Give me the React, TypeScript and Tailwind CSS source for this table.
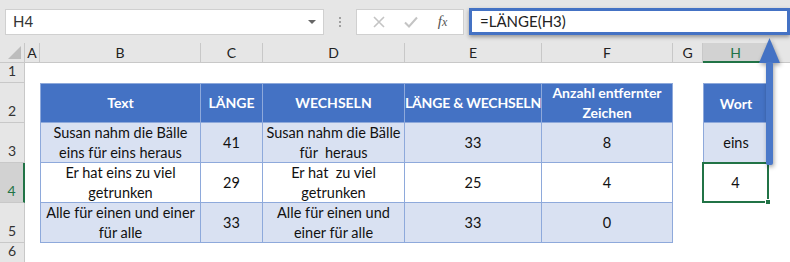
import React from 'react';

const colWidths = [25, 15, 161, 62, 142, 137, 131, 30, 66, 64];
const colLetters = ['A', 'B', 'C', 'D', 'E', 'F', 'G', 'H', ''];

const headers = ['Text', 'LÄNGE', 'WECHSELN', 'LÄNGE & WECHSELN', 'Anzahl entfernter\nZeichen'];
const rows = [
  ['Susan nahm die Bälle\neins für eins heraus', '41', 'Susan nahm die Bälle\nfür  heraus', '33', '8'],
  ['Er hat eins zu viel\ngetrunken', '29', 'Er hat  zu viel\ngetrunken', '25', '4'],
  ['Alle für einen und einer\nfür alle', '33', 'Alle für einen und\neiner für alle', '33', '0'],
];

const RowHead: React.FC<{ n: number; active?: boolean }> = ({ n, active }) => (
  <div
    className={`flex items-end justify-center pb-[1px] border-b border-[#c8c8c8] text-[14px] ${
      active
        ? 'bg-[#d2d2d2] border-r-2 border-r-[#217346] text-[#217346]'
        : 'bg-[#e6e6e6] border-r border-r-[#c8c8c8] text-[#333]'
    }`}
  >
    {n}
  </div>
);

const App: React.FC = () => {
  return (
    <div
      className="relative w-[790px] h-[262px] overflow-hidden bg-white"
      style={{ fontFamily: 'Lato, "Open Sans", sans-serif' }}
    >
      {/* Formula bar */}
      <div className="flex items-center h-[43px] bg-[#e6e6e6]">
        <div className="ml-[5px] w-[319px] h-[26px] bg-white border border-[#d0d0d0] flex items-center justify-between px-[7px] text-[15px] text-[#333]">
          <span>H4</span>
          <span className="w-0 h-0 border-l-[4px] border-r-[4px] border-t-[4px] border-l-transparent border-r-transparent border-t-[#666]" />
        </div>
        <div className="w-[32px] flex flex-col items-center gap-[2px]">
          <span className="w-[2px] h-[2px] bg-[#a0a0a0]" />
          <span className="w-[2px] h-[2px] bg-[#a0a0a0]" />
          <span className="w-[2px] h-[2px] bg-[#a0a0a0]" />
        </div>
        <div className="w-[108px] h-[26px] bg-white border border-[#d0d0d0] flex items-center justify-around px-[6px]">
          <svg width="12" height="12" viewBox="0 0 12 12">
            <path d="M1 1 L11 11 M11 1 L1 11" stroke="#c4c4c4" strokeWidth="1.6" fill="none" />
          </svg>
          <svg width="14" height="12" viewBox="0 0 14 12">
            <path d="M1 6.5 L5 10.5 L13 1.5" stroke="#c4c4c4" strokeWidth="2" fill="none" />
          </svg>
          <span className="text-[15px] italic text-[#555]" style={{ fontFamily: '"Liberation Serif", serif' }}>
            f<span className="text-[12px]">x</span>
          </span>
        </div>
        <div className="ml-[5px] flex-1 h-[27px] bg-white border-[3px] border-[#4472c4] shadow-[0_2px_4px_rgba(0,0,0,0.35)] flex items-center pl-[8px] text-[15px] text-[#222]">
          =LÄNGE(H3)
        </div>
      </div>

      {/* Sheet */}
      <div
        className="grid"
        style={{
          gridTemplateColumns: colWidths.map((w) => `${w}px`).join(' '),
          gridTemplateRows: '20px 20px 40px 40px 40px 40px 20px',
        }}
      >
        {/* corner */}
        <div className="bg-[#e6e6e6] border-r border-b border-[#c8c8c8] flex items-end justify-end p-[3px]">
          <svg width="13" height="13" viewBox="0 0 13 13">
            <polygon points="13,0 13,13 0,13" fill="#bdbdbd" />
          </svg>
        </div>
        {colLetters.map((l, i) => (
          <div
            key={i}
            className={`flex items-center justify-center text-[14px] border-r border-[#c8c8c8] ${
              l === 'H'
                ? 'bg-[#d2d2d2] border-b-2 border-b-[#217346] text-[#217346]'
                : 'bg-[#e6e6e6] border-b border-b-[#c8c8c8] text-[#222]'
            }`}
          >
            {l}
          </div>
        ))}

        {/* row 1 */}
        <RowHead n={1} />
        <div className="col-span-9" />

        {/* row 2 header */}
        <RowHead n={2} />
        <div />
        {headers.map((h, i) => (
          <div
            key={h}
            className={`bg-[#4472c4] text-white font-bold text-[14px] leading-[20px] flex items-center justify-center text-center whitespace-pre border-r border-t border-b border-[#8ea9db] ${
              i === 0 ? 'border-l' : ''
            } ${i === 3 ? 'tracking-[-0.2px]' : ''}`}
          >
            {h}
          </div>
        ))}
        <div />
        <div className="bg-[#4472c4] text-white font-bold text-[14px] flex items-center justify-center border border-[#8ea9db]">
          Wort
        </div>
        <div />

        {rows.map((r, ri) => {
          const n = ri + 3;
          const fill = ri % 2 === 0 ? 'bg-[#d9e1f2]' : 'bg-white';
          return (
            <React.Fragment key={n}>
              <RowHead n={n} active={n === 4} />
              <div />
              {r.map((c, ci) => (
                <div
                  key={ci}
                  className={`${fill} text-[14.5px] leading-[20px] text-[#111] flex items-center justify-center text-center whitespace-pre border-r border-b border-[#8ea9db] ${
                    ci === 0 ? 'border-l' : ''
                  }`}
                >
                  {c}
                </div>
              ))}
              <div />
              {n === 3 && (
                <div className="bg-[#d9e1f2] text-[14.5px] text-[#111] flex items-center justify-center border-x border-b border-[#8ea9db]">
                  eins
                </div>
              )}
              {n === 4 && (
                <div className="relative bg-white text-[14.5px] text-[#111] flex items-center justify-center border-2 border-[#217346] -mt-[1px] -ml-[1px]">
                  4
                  <span className="absolute -right-[4px] -bottom-[4px] w-[6px] h-[6px] bg-[#217346] border border-white" />
                </div>
              )}
              {n === 5 && <div />}
              <div />
            </React.Fragment>
          );
        })}

        <RowHead n={6} />
        <div className="col-span-9" />
      </div>

      {/* Arrow from H4 to the formula bar */}
      <svg
        className="absolute left-[758px] top-[38px] drop-shadow-[1px_2px_2px_rgba(0,0,0,0.35)]"
        width="23"
        height="128"
        viewBox="0 0 23 128"
      >
        <polygon points="11.5,0 22,25 1,25" fill="#4472c4" />
        <rect x="8" y="24" width="7" height="103" rx="2" fill="#4a78c9" />
      </svg>
    </div>
  );
};

export default App;
